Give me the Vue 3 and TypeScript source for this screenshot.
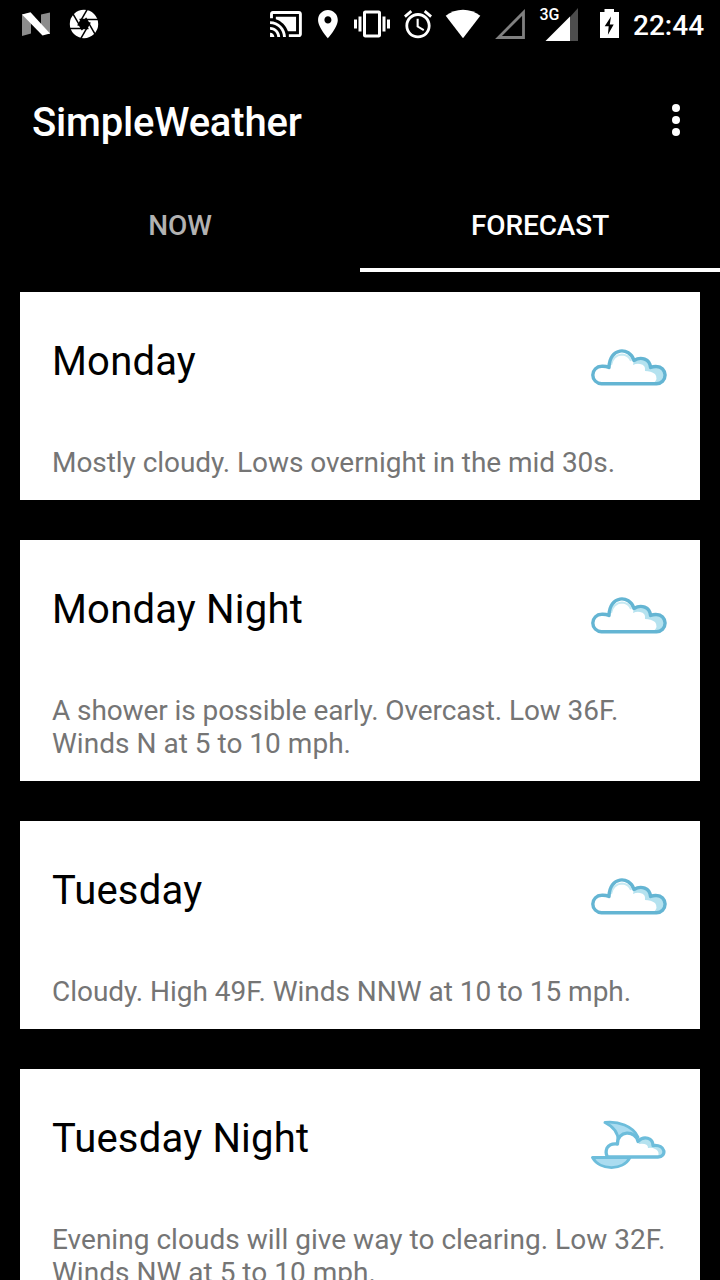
<script setup lang="ts">
type Icon = 'cloud' | 'moon'
interface Line {
  text: string
  tracking: number
}
interface Forecast {
  day: string
  icon: Icon
  lines: Line[]
}

const forecasts: Forecast[] = [
  { day: 'Monday', icon: 'cloud', lines: [{ text: 'Mostly cloudy. Lows overnight in the mid 30s.', tracking: -0.05 }] },
  {
    day: 'Monday Night',
    icon: 'cloud',
    lines: [
      { text: 'A shower is possible early. Overcast. Low 36F.', tracking: -0.09 },
      { text: 'Winds N at 5 to 10 mph.', tracking: 0.02 },
    ],
  },
  { day: 'Tuesday', icon: 'cloud', lines: [{ text: 'Cloudy. High 49F. Winds NNW at 10 to 15 mph.', tracking: -0.03 }] },
  {
    day: 'Tuesday Night',
    icon: 'moon',
    lines: [
      { text: 'Evening clouds will give way to clearing. Low 32F.', tracking: 0.03 },
      { text: 'Winds NW at 5 to 10 mph.', tracking: 0.02 },
    ],
  },
]
const blades = [0, 60, 120, 180, 240, 300]
const cloudOutline = 'M21.500 43.700A8.700 8.700 0 0 1 21.500 26.300Q25.500 26 29 27.500C29.500 7 49.500 6.500 54 20.500C61 16 70 19 70.500 27.500Q73.500 26.300 76.500 26.500A8.600 8.600 0 0 1 76.500 43.700z'
</script>

<template>
  <div class="screen">
    <header class="status">
      <svg width="44" height="48" viewBox="16 0 44 48">
        <path d="M22 14.500l9-1.500v20.500l-9 2.500z" fill="#8c8c8c" />
        <path d="M41 14.500l9-2v21.500l-9 0z" fill="#8c8c8c" />
        <path d="M22 14.500L30.500 12.300 50 33.500 42.500 35.500z" fill="#fff" />
      </svg>
      <svg width="48" height="48" viewBox="60 0 48 48">
        <circle cx="84" cy="24" r="14.200" fill="#fff" />
        <path v-for="a in blades" :key="a" d="M79.500 19.500H98" :transform="`rotate(${a} 84 24)`" stroke="#000" stroke-width="1.500" />
        <path d="M81.400 19.500h5.200l2.600 4.500-2.600 4.500h-5.200L78.800 24z" fill="#000" />
      </svg>
      <span class="grow"></span>
      <svg width="48" height="48" viewBox="262 0 48 48">
        <path transform="translate(268.600 6.700) scale(1.445)" fill="#fff" d="M1 18v3h3c0-1.660-1.340-3-3-3zm0-4v2c2.760 0 5 2.240 5 5h2c0-3.870-3.130-7-7-7zm18-7H5v1.630c3.960 1.280 7.090 4.410 8.370 8.370H19V7zM1 10v2c4.970 0 9 4.030 9 9h2c0-6.080-4.930-11-11-11zm20-7H3c-1.100 0-2 .9-2 2v3h2V5h18v14h-7v2h7c1.100 0 2-.9 2-2V5c0-1.100-.9-2-2-2z" />
      </svg>
      <svg width="36" height="48" viewBox="310 0 36 48">
        <path transform="translate(311 7.200) scale(1.410)" fill="#fff" d="M12 2C8.130 2 5 5.130 5 9c0 5.250 7 13 7 13s7-7.750 7-13c0-3.870-3.130-7-7-7zm0 9.500c-1.380 0-2.500-1.120-2.500-2.500s1.120-2.500 2.500-2.500 2.500 1.120 2.500 2.500-1.120 2.500-2.500 2.500z" />
      </svg>
      <svg width="51" height="48" viewBox="346 0 51 48">
        <path transform="translate(354 6) scale(1.500)" fill="#fff" d="M0 15h2V9H0v6zm3 2h2V7H3v10zm19-8v6h2V9h-2zm-3 8h2V7h-2v10zM16.500 3h-9C6.670 3 6 3.670 6 4.500v15c0 .83.67 1.500 1.500 1.500h9c.83 0 1.500-.67 1.500-1.500v-15c0-.83-.67-1.500-1.500-1.500zM16 19H8V5h8v14z" />
      </svg>
      <svg width="42" height="48" viewBox="397 0 42 48">
        <path transform="translate(401.200 7.500) scale(1.400)" fill="#fff" d="M22 5.720l-4.600-3.860-1.290 1.530 4.600 3.860L22 5.720zM7.880 3.390L6.600 1.860 2 5.710l1.290 1.530 4.590-3.850zM12.500 8H11v6l4.750 2.850.75-1.230-4-2.370V8zM12 4c-4.970 0-9 4.030-9 9s4.020 9 9 9c4.970 0 9-4.030 9-9s-4.030-9-9-9zm0 16c-3.870 0-7-3.130-7-7s3.130-7 7-7 7 3.130 7 7-3.130 7-7 7z" />
      </svg>
      <svg width="49" height="48" viewBox="439 0 49 48">
        <path d="M463 38.200L445.700 15.800C450.600 12 456.600 9.800 463 9.800s12.400 2.200 17.300 6z" fill="#fff" />
      </svg>
      <svg width="46" height="48" viewBox="488 0 46 48">
        <path d="M498.500 37.500H523.500V12.500z" fill="none" stroke="#808080" stroke-width="2.800" />
      </svg>
      <svg width="56" height="48" viewBox="534 0 56 48">
        <path d="M570 17v24h8V8z" fill="#4d4d4d" />
        <path d="M545.500 41H570V16.500z" fill="#fff" />
        <text x="539.500" y="20" class="net">3G</text>
      </svg>
      <svg width="43" height="48" viewBox="590 0 43 48">
        <path d="M604.500 9h9.500v3h5v26h-19V12h4.500zM611 16.500l-6.300 9.700h4l-.8 8.500 5.800-10.300h-3.900z" fill="#fff" fill-rule="evenodd" />
      </svg>
      <span class="clock">22:44</span>
    </header>

    <div class="toolbar">
      <h1>SimpleWeather</h1>
      <svg class="more" width="8" height="32" viewBox="0 0 8 32" fill="#fff">
        <circle cx="4" cy="4" r="4" /><circle cx="4" cy="16" r="4" /><circle cx="4" cy="28" r="4" />
      </svg>
    </div>

    <nav class="tabs">
      <div class="tab">NOW</div>
      <div class="tab active">FORECAST</div>
    </nav>

    <main class="list">
      <article v-for="f in forecasts" :key="f.day" class="card">
        <div class="head">
          <h2>{{ f.day }}</h2>
          <svg v-if="f.icon === 'cloud'" class="weather" width="100" height="60" viewBox="0 0 100 60" stroke-linejoin="round">
            <path :d="cloudOutline" fill="#fff" />
            <path d="M54 20.500C61 16 70 19 70.500 27.500Q73.500 26.300 76.500 26.500A8.600 8.600 0 0 1 76.500 43.700H73Q79 39 75 34Q71 31 65 31Q66 25 60 24Q57 23 53 25z" fill="#b5e2ef" />
            <path d="M31 25Q33 15 42 14.500Q49 15 51 21" fill="none" stroke="#c6e9f2" stroke-width="2" />
            <path :d="cloudOutline" fill="none" stroke="#64b5d3" stroke-width="3.400" />
          </svg>
          <svg v-else class="weather" width="100" height="70" viewBox="0 7 100 70" stroke-linejoin="round">
            <path d="M25 12.500C38 11 53 16 58 27L38 33C39 24 34 17 25 12.500zM12.500 47.500H50C43 61 20 61 12.500 47.500z" fill="#abdcf0" stroke="#6dbddb" stroke-width="2.800" />
            <path d="M27.500 47Q25 43 27 38Q30 33 37.500 34C37 20 56 20 58 31.500C64 25 73 28 73 35.500C86 34 87 47 78 47z" fill="#fff" />
            <path d="M58 31.500C64 25 73 28 73 35.500C86 34 87 47 78 47Q80 41 75 39Q72 37 68 38Q68 33 59 34z" fill="#b5e2ef" />
            <path d="M27.500 47Q25 43 27 38Q30 33 37.500 34C37 20 56 20 58 31.500C64 25 73 28 73 35.500C86 34 87 47 78 47z" fill="none" stroke="#6dbddb" stroke-width="3.300" />
          </svg>
        </div>
        <p><span v-for="l in f.lines" :key="l.text" :style="{ letterSpacing: l.tracking + 'px' }">{{ l.text }}</span></p>
      </article>
    </main>
  </div>
</template>

<style>
body { margin: 0; background: #000; overflow: hidden; }
</style>

<style scoped>
.screen { width: 720px; height: 1280px; overflow: hidden; background: #000; font-family: Roboto, sans-serif; }
.status { display: flex; height: 48px; padding: 0 16px; color: #fff; }
.status svg { flex: none; }
.grow { flex: 1; }
.net { font-family: Roboto, sans-serif; font-size: 16px; font-weight: 500; fill: #fff; }
.clock { width: 71px; font-size: 28px; font-weight: 500; line-height: 51px; white-space: nowrap; }
.toolbar { display: flex; height: 128px; align-items: center; justify-content: space-between; padding: 0 40px 0 32px; box-sizing: border-box; }
h1 { margin: 22px 0 0; font-size: 40px; font-weight: 500; line-height: 48px; letter-spacing: -0.19px; color: #fff; }
.more { margin-top: 16px; }
.tabs { display: flex; height: 96px; }
.tab { flex: 1; box-sizing: border-box; height: 96px; border-bottom: 4px solid transparent; padding-top: 5px; text-align: center; font-size: 28px; font-weight: 500; line-height: 90px; letter-spacing: -0.1px; color: #b2b2b2; }
.active { color: #fff; border-bottom-color: #fff; }
.list { display: flex; flex-direction: column; gap: 40px; padding: 20px 20px 0; }
.card { flex: none; padding: 48px 20px 21px 32px; background: #fff; }
.head { display: flex; justify-content: space-between; height: 106px; }
h2 { margin: 0; font-size: 40px; font-weight: 400; line-height: 44px; letter-spacing: 0.2px; color: #000; }
.weather { flex: none; filter: blur(0.5px); }
p { margin: 0; font-size: 28px; line-height: 33px; color: #757575; white-space: nowrap; }
p span { display: block; }
</style>
